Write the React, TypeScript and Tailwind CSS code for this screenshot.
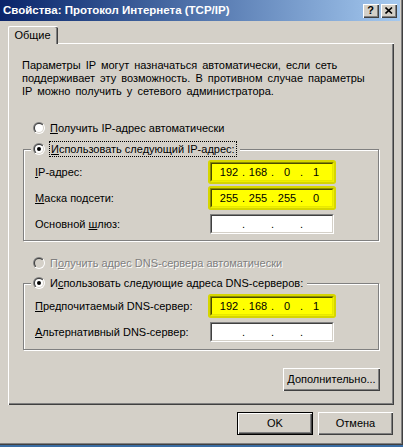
import React from "react";

const U = ({ children }: { children: React.ReactNode }) => (
  <span className="underline decoration-1 underline-offset-[1px]">{children}</span>
);

function Radio({ checked, disabled }: { checked?: boolean; disabled?: boolean }) {
  return (
    <svg width="12" height="12" viewBox="0 0 12 12" className="shrink-0">
      <defs>
        <linearGradient id="rgo" x1="0" y1="0" x2="1" y2="1">
          <stop offset="0.5" stopColor="#808080" />
          <stop offset="0.5" stopColor="#ffffff" />
        </linearGradient>
        <linearGradient id="rgi" x1="0" y1="0" x2="1" y2="1">
          <stop offset="0.5" stopColor="#404040" />
          <stop offset="0.5" stopColor="#d4d0c8" />
        </linearGradient>
      </defs>
      <circle cx="6" cy="6" r="6" fill="url(#rgo)" />
      <circle cx="6" cy="6" r="5" fill="url(#rgi)" />
      <circle cx="6" cy="6" r="4" fill={disabled ? "#d4d0c8" : "#ffffff"} />
      {checked && <circle cx="6" cy="6" r="2" fill="#000000" />}
    </svg>
  );
}

function IpField({ value, hl }: { value?: string[]; hl?: boolean }) {
  const v = value ?? ["", "", "", ""];
  return (
    <div
      className={
        hl
          ? "w-[124px] h-[20px] border border-t-[#8c8c00] border-l-[#8c8c00] border-b-[#f0f000] border-r-[#f0f000] shadow-[0_0_0_2px_#d6d600] rounded-[1px]"
          : "w-[124px] h-[20px] border border-t-[#808080] border-l-[#808080] border-b-white border-r-white"
      }
    >
      <div
        className={
          hl
            ? "h-full flex items-center pl-[5px] border border-t-[#4a4a00] border-l-[#4a4a00] border-b-[#e8e800] border-r-[#e8e800] bg-[#ffff00]"
            : "h-full flex items-center pl-[5px] border border-t-[#404040] border-l-[#404040] border-b-[#d4d0c8] border-r-[#d4d0c8] bg-white"
        }
      >
        <span className="w-[24px] text-center">{v[0]}</span>
        <span className="w-[5px] text-center">.</span>
        <span className="w-[24px] text-center">{v[1]}</span>
        <span className="w-[5px] text-center">.</span>
        <span className="w-[24px] text-center">{v[2]}</span>
        <span className="w-[5px] text-center">.</span>
        <span className="w-[24px] text-center">{v[3]}</span>
      </div>
    </div>
  );
}

function Row({ label, value, hl }: { label: React.ReactNode; value?: string[]; hl?: boolean }) {
  return (
    <div className="flex items-center h-[20px] pl-[11px]">
      <div className="w-[175px] whitespace-nowrap">{label}</div>
      <IpField value={value} hl={hl} />
    </div>
  );
}

function Btn({ children, def, w }: { children: React.ReactNode; def?: boolean; w: string }) {
  return (
    <div className={`${w} h-[23px] bg-[#d4d0c8] ${def ? "border border-black" : ""}`}>
      <div className="h-full w-full flex items-center justify-center shadow-[inset_1px_1px_0_#ffffff,inset_-1px_-1px_0_#404040,inset_-2px_-2px_0_#808080]">
        {children}
      </div>
    </div>
  );
}

export default function App() {
  return (
    <div className="w-[403px] h-[447px] bg-[#d4d0c8] flex flex-col overflow-hidden font-['Liberation_Sans',Arial,sans-serif] text-[11px] text-black leading-[13px]">
      <div className="h-[445px] w-[403px] flex flex-col shadow-[inset_-1px_-1px_0_#404040,inset_-2px_-2px_0_#808080]">
        {/* Title bar */}
        <div className="w-[400px] h-[21px] flex items-center bg-linear-to-r from-[#0a246a] to-[#a6caf0]">
          <div className="pl-[3px] text-white font-bold text-[11.5px] whitespace-nowrap">
            Свойства: Протокол Интернета (TCP/IP)
          </div>
          <div className="ml-auto flex gap-[2px] pr-[3px]">
            <div className="w-[16px] h-[14px] bg-[#d4d0c8] flex items-center justify-center shadow-[inset_1px_1px_0_#ffffff,inset_-1px_-1px_0_#404040,inset_-2px_-2px_0_#808080]">
              <span className="font-bold text-[11px] leading-none pr-[1px]">?</span>
            </div>
            <div className="w-[16px] h-[14px] bg-[#d4d0c8] flex items-center justify-center shadow-[inset_1px_1px_0_#ffffff,inset_-1px_-1px_0_#404040,inset_-2px_-2px_0_#808080]">
              <svg width="8" height="7" viewBox="0 0 8 7" className="mr-[1px]">
                <path d="M0.5 0.5 L7 6.5 M7 0.5 L0.5 6.5" stroke="#000" strokeWidth="1.6" />
              </svg>
            </div>
          </div>
        </div>

        {/* Tab row */}
        <div className="mt-[5px] pl-[8px] flex">
          <div className="relative z-10 -mb-[1px] w-[50px] h-[18px] bg-[#d4d0c8] border-t border-l border-white rounded-tl-[2px] rounded-tr-[2px] shadow-[inset_-1px_0_0_#404040,inset_-2px_0_0_#808080] flex items-center justify-center pb-[1px] pr-[2px]">
            Общие
          </div>
        </div>

        {/* Panel */}
        <div className="ml-[8px] w-[386px] h-[362px] border-t border-l border-white shadow-[inset_-1px_-1px_0_#404040,inset_-2px_-2px_0_#808080] flex flex-col">
          <div className="mt-[15px] pl-[13px] leading-[13px] whitespace-nowrap [word-spacing:2px]">
            Параметры IP могут назначаться автоматически, если сеть
            <br />
            поддерживает эту возможность. В противном случае параметры
            <br />
            IP можно получить у сетевого администратора.
          </div>

          <div className="mt-[23px] h-[14px] pl-[24px] flex items-center gap-[5px]">
            <Radio />
            <span>
              <U>П</U>олучить IP-адрес автоматически
            </span>
          </div>

          {/* Group 1 */}
          <div className="relative mt-[14px] ml-[14px] w-[356px] h-[92px] border border-[#808080] shadow-[inset_1px_1px_0_#ffffff,1px_1px_0_#ffffff] flex flex-col pt-[12px] gap-[6px]">
            <div className="absolute left-[7px] top-[-9px] h-[16px] bg-[#d4d0c8] flex items-center gap-[4px] pl-[2px] pr-[3px]">
              <Radio checked />
              <span className="h-[16px] flex items-center border border-dotted border-black pl-[1px] pr-[1px] whitespace-nowrap">
                <span>
                  <U>И</U>спользовать следующий IP-адрес:
                </span>
              </span>
            </div>
            <Row label={<><U>I</U>P-адрес:</>} value={["192", "168", "0", "1"]} hl />
            <Row label={<><U>М</U>аска подсети:</>} value={["255", "255", "255", "0"]} hl />
            <Row label={<>Основной <U>ш</U>люз:</>} />
          </div>

          <div className="mt-[15px] h-[14px] pl-[24px] flex items-center gap-[5px]">
            <Radio disabled />
            <span className="text-[#808080] [text-shadow:1px_1px_0_#ffffff]">
              П<U>о</U>лучить адрес DNS-сервера автоматически
            </span>
          </div>

          {/* Group 2 */}
          <div className="relative mt-[13px] ml-[14px] w-[356px] h-[67px] border border-[#808080] shadow-[inset_1px_1px_0_#ffffff,1px_1px_0_#ffffff] flex flex-col pt-[12px] gap-[6px]">
            <div className="absolute left-[7px] top-[-9px] h-[16px] bg-[#d4d0c8] flex items-center gap-[5px] pl-[2px] pr-[4px]">
              <Radio checked />
              <span className="whitespace-nowrap">
                И<U>с</U>пользовать следующие адреса DNS-серверов:
              </span>
            </div>
            <Row label={<><U>П</U>редпочитаемый DNS-сервер:</>} value={["192", "168", "0", "1"]} hl />
            <Row label={<><U>А</U>льтернативный DNS-сервер:</>} />
          </div>

          <div className="mt-[18px] flex justify-end pr-[14px]">
            <Btn w="w-[97px]">
              <span>
                <U>Д</U>ополнительно...
              </span>
            </Btn>
          </div>
        </div>

        {/* Bottom buttons */}
        <div className="mt-[7px] flex justify-end gap-[5px] pr-[10px]">
          <Btn w="w-[76px]" def>
            OK
          </Btn>
          <Btn w="w-[75px]">Отмена</Btn>
        </div>
      </div>
      <div className="h-[2px] bg-[#3a6ea5]" />
    </div>
  );
}
